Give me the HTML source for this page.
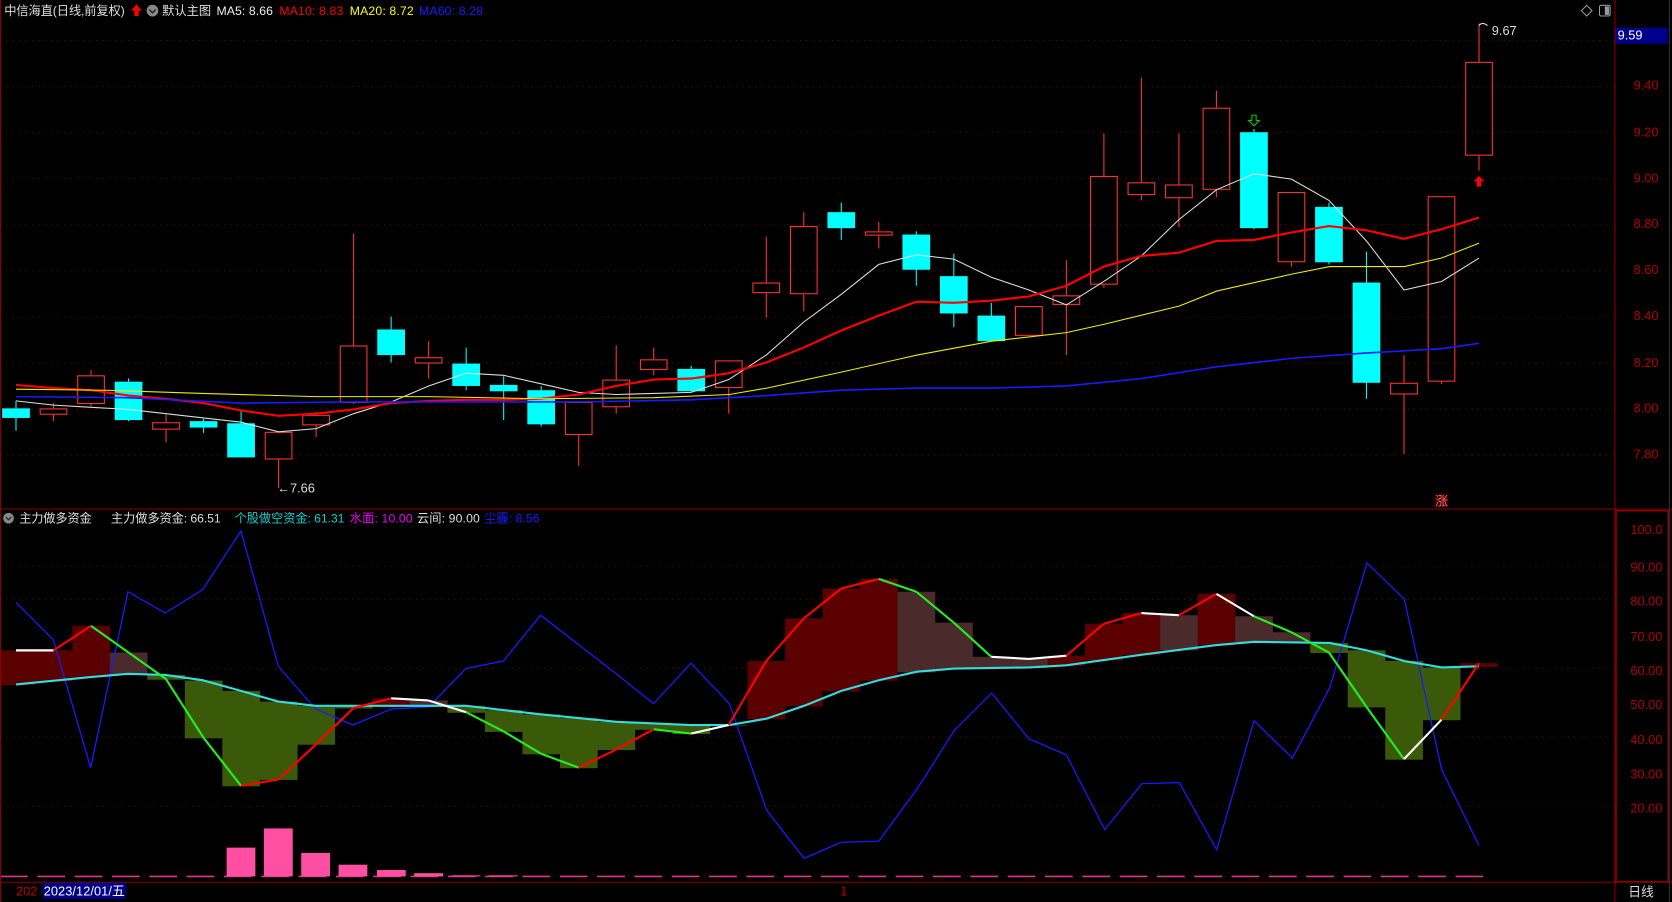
<!DOCTYPE html>
<html><head><meta charset="utf-8"><style>
html,body{margin:0;padding:0;background:#000;width:1672px;height:902px;overflow:hidden}
svg{display:block}
text{font-family:"Liberation Sans","Noto Sans CJK SC",sans-serif;font-size:12px}
.h{font-size:11.5px}
</style></head><body>
<svg id="s" width="1672" height="902" viewBox="0 0 1568 846" preserveAspectRatio="none">
<rect width="1568" height="846" fill="#000"/>
<g id="grid"></g>
<g id="low"></g>
<g id="main"></g>
<line x1="1514.5" y1="0" x2="1514.5" y2="846" stroke="#8b0000" stroke-width="1"/>
<line x1="0" y1="477.5" x2="1568" y2="477.5" stroke="#8b0000"/>
<line x1="0" y1="827.5" x2="1568" y2="827.5" stroke="#8b0000"/>
<rect x="1515.5" y="479" width="49" height="348" fill="none" stroke="#8b0000" stroke-width="1.5"/>
<line x1="0.5" y1="0" x2="0.5" y2="846" stroke="#8b0000"/>
<line x1="1565.5" y1="0" x2="1565.5" y2="846" stroke="#333"/>
<text class="h" x="4" y="14" fill="#ddd" textLength="113">中信海直(日线,前复权)</text>
<path d="M128 4 l5 6 h-3 v5 h-4 v-5 h-3z" fill="#f00"/>
<circle cx="143" cy="10" r="5.5" fill="#888"/><path d="M140 9 l3 3 l3 -3" stroke="#222" fill="none" stroke-width="1.3"/>
<text class="h" x="152" y="14" fill="#ddd" textLength="46">默认主图</text>
<text class="h" x="203" y="14" fill="#eee" textLength="53">MA5: 8.66</text>
<text class="h" x="262" y="14" fill="#f00" textLength="60">MA10: 8.83</text>
<text class="h" x="328" y="14" fill="#ff0" textLength="60">MA20: 8.72</text>
<text class="h" x="393" y="14" fill="#1a1aff" textLength="60">MA60: 8.28</text>
<path d="M1488 5 l5 5 l-5 5 l-5 -5z" fill="none" stroke="#999"/>
<rect x="1500" y="5" width="10" height="10" rx="1.5" fill="none" stroke="#999"/><rect x="1505" y="6" width="4" height="8" fill="#999"/>
<rect x="1515" y="26" width="49" height="15" fill="#00008b"/>
<text x="1517" y="37" fill="#fff" font-size="11">9.59</text>
<g fill="#b00000" font-size="12.5">
<text x="1532" y="84">9.40</text><text x="1532" y="128">9.20</text><text x="1532" y="171">9.00</text>
<text x="1532" y="214">8.80</text><text x="1532" y="257">8.60</text><text x="1532" y="300">8.40</text>
<text x="1532" y="344">8.20</text><text x="1532" y="387">8.00</text><text x="1532" y="430">7.80</text>
</g>
<g fill="#b00000" font-size="12.5">
<text x="1529" y="501">100.0</text><text x="1529" y="536">90.00</text><text x="1529" y="568">80.00</text>
<text x="1529" y="601">70.00</text><text x="1529" y="633">60.00</text><text x="1529" y="665">50.00</text>
<text x="1529" y="698">40.00</text><text x="1529" y="730">30.00</text><text x="1529" y="762">20.00</text>
</g>
<circle cx="8" cy="486" r="5" fill="#888"/><path d="M5.5 485 l2.5 2.5 l2.5 -2.5" stroke="#222" fill="none" stroke-width="1.2"/>
<text class="h" x="18" y="490" fill="#ddd" textLength="68">主力做多资金</text>
<text class="h" x="104" y="490" fill="#ddd" textLength="103">主力做多资金: 66.51</text>
<text class="h" x="220" y="490" fill="#1cc" textLength="103">个股做空资金: 61.31</text>
<text class="h" x="328" y="490" fill="#e0e" textLength="59">水面: 10.00</text>
<text class="h" x="391" y="490" fill="#ddd" textLength="59">云间: 90.00</text>
<text class="h" x="454" y="490" fill="#1a1aff" textLength="52">尘霾: 8.56</text>
<text x="15" y="840" fill="#c00000">202</text>
<rect x="40" y="828" width="78" height="15" fill="#00008b"/>
<text x="41" y="840" fill="#fff" textLength="76">2023/12/01/五</text>
<text x="788" y="840" fill="#c00000" font-size="10">1</text>
<text x="1527" y="841" fill="#ddd">日线</text>
<text x="260" y="462" fill="#ddd" font-size="11">←7.66</text>
<text x="1399" y="33" fill="#ddd" font-size="11">9.67</text>
<path d="M1387 24 q3 -4 8 0" stroke="#ddd" fill="none"/>
<path d="M1387 165 l5 5 h-3 v5 h-4 v-5 h-3z" fill="#f00"/>
<path d="M1176 118 l-5 -5 h3 v-5 h4 v5 h3z" fill="none" stroke="#0c0"/>
<rect x="1345" y="463" width="13" height="13" fill="#300"/><text x="1346" y="474" fill="#f66" font-size="10">涨</text>
</svg>
<script>
var NS="http://www.w3.org/2000/svg";
function el(p,t,a){var e=document.createElementNS(NS,t);for(var k in a)e.setAttribute(k,a[k]);document.getElementById(p).appendChild(e);return e;}
for(var y=38;y<440;y+=43.2) el("grid","line",{x1:0,x2:1514,y1:y,y2:y,stroke:"#7a0000","stroke-dasharray":"1 5"});
[531,562,627,691,756].forEach(function(y){el("grid","line",{x1:0,x2:1514,y1:y,y2:y,stroke:"#7a0000","stroke-dasharray":"1 5"});});
el("grid","line",{x1:0,x2:1400,y1:822,y2:822,stroke:"#e0308a","stroke-dasharray":"26 9","stroke-width":1.5});
var X=[];for(var i=0;i<40;i++)X.push(15+i*35.18);
var C=[[383,392,376,404,0],[383,389,378,395,1],[352,379,347,381,1],[358,394,355,395,0],[396,403,389,415,1],[395,401,393,406,0],[397,429,384,429,0],[405,431,405,458,1],[389,399,386,410,1],[324,378,219,379,1],[309,333,297,340,0],[335,341,320,355,1],[341,362,326,366,0],[361,367,353,394,0],[366,398,362,400,0],[377,408,376,437,1],[356,382,324,388,1],[337,347,326,352,1],[346,367,343,368,0],[338,364,338,388,1],[265,275,222,298,1],[212,276,199,292,1],[199,214,190,225,0],[217,221,208,233,1],[220,253,217,268,0],[259,294,238,307,0],[296,320,284,320,0],[287,315,287,315,1],[277,286,244,333,1],[165,267,125,270,1],[171,183,73,188,1],[173,186,125,213,1],[101,178,85,185,1],[124,214,121,215,0],[180,246,180,250,1],[194,246,190,248,0],[265,359,236,374,0],[359,370,333,426,1],[184,358,184,360,1],[58,146,22,160,1]];
C.forEach(function(c,i){var x=X[i],w=26;
 if(c[4]){el("main","line",{x1:x,x2:x,y1:c[2],y2:c[0],stroke:"#f33"});el("main","line",{x1:x,x2:x,y1:c[1],y2:c[3],stroke:"#f33"});
  el("main","rect",{x:x-w/2+.5,y:c[0]+.5,width:w-1,height:Math.max(c[1]-c[0]-1,1),fill:"none",stroke:"#f33"});}
 else{el("main","line",{x1:x,x2:x,y1:c[2],y2:c[3],stroke:"#0ff"});el("main","rect",{x:x-w/2,y:c[0],width:w,height:Math.max(c[1]-c[0],1),fill:"#0ff"});}
});
function pl(pts,col,sw,g){el(g||"main","polyline",{points:pts.map(function(p){return p.join(",")}).join(" "),fill:"none",stroke:col,"stroke-width":sw||1});}
var m5=[376,380,382,384,388,392,396,405,402,388,377,362,350,352,360,368,370,369,368,356,333,302,276,248,239,243,260,272,286,264,240,206,178,163,168,188,226,272,264,242];
var m10=[361,364,366,371,374,378,385,390,388,384,378,376,375,375,374,370,362,356,355,350,340,326,310,296,283,284,282,278,268,250,240,237,226,225,218,212,216,224,215,204];
pl(m5.map(function(y,i){return[X[i],y]}),"#ddd",1);
pl(m10.map(function(y,i){return[X[i],y]}),"#f00",2);
pl([[15,365],[100,366],[190,369],[296,372],[402,372],[507,374],[613,373],[684,370],[719,364],[789,349],[860,333],[930,320],[1000,312],[1036,304],[1106,287],[1141,273],[1212,257],[1247,250],[1317,250],[1352,242],[1387,228]],"#ee0",1);
pl([[15,372],[120,373],[226,378],[331,377],[437,377],[543,377],[648,375],[719,371],[789,366],[860,364],[930,364],[1000,362],[1071,355],[1141,344],[1212,336],[1282,331],[1352,327],[1387,322]],"#1a1aff",1.5);
var M=[610,610,587,612,637,692,737,731,698,664,655,657,668,686,707,720,703,684,688,680,620,580,552,543,555,584,616,618,615,585,575,577,557,578,593,612,663,712,675,622];
var cy=[[15,642],[85,635],[120,632],[155,633],[190,638],[226,648],[261,658],[296,662],[367,662],[437,662],[507,670],[578,677],[648,680],[684,680],[719,674],[754,662],[789,648],[824,638],[860,630],[895,627],[965,626],[1000,624],[1071,614],[1141,605],[1176,602],[1247,603],[1282,610],[1317,620],[1352,626],[1387,625]];
function cyAt(x){for(var j=0;j<cy.length-1;j++){if(x<=cy[j+1][0]){var a=cy[j],b=cy[j+1];return a[1]+(b[1]-a[1])*(x-a[0])/(b[0]-a[0]);}}return cy[cy.length-1][1];}
M.forEach(function(m,i){var c=cyAt(X[i]),x=X[i]-17.6;var prev=i?M[i-1]:m;var col;
 if(m<c){col=(m<=prev)?"#5a0000":"#4a2a2a";}else col="#3a5a0a";
 el("low","rect",{x:x,y:Math.min(m,c),width:35.4,height:Math.abs(m-c)+.5,fill:col});});
var pk=[[226,795],[261,777],[296,800],[331,811],[367,816],[402,819],[437,821],[472,821]];
pk.forEach(function(p){el("low","rect",{x:p[0]-13.5,y:p[1],width:27,height:822-p[1],fill:"#ff4fa3"});});
pl([[15,565],[50,600],[85,720],[120,555],[155,575],[190,553],[226,498],[261,625],[296,665],[331,680],[367,665],[402,663],[437,627],[472,620],[507,577],[543,605],[578,632],[613,660],[648,622],[684,660],[719,760],[754,805],[789,790],[824,789],[860,740],[895,685],[930,650],[965,693],[1000,708],[1036,778],[1071,735],[1106,734],[1141,797],[1176,676],[1212,711],[1247,645],[1282,528],[1317,562],[1352,722],[1387,793]],"#1a1aff",1.2,"low");
pl(cy,"#3dd",2,"low");
for(var i=0;i<39;i++){var d=M[i+1]-M[i];var col=Math.abs(d)<4?"#fff":(d<0?"#f00":"#2e2");
 if(i==0||i==11||i==18||i==32||i==37) col="#fff";
 el("low","line",{x1:X[i],y1:M[i],x2:X[i+1],y2:M[i+1],stroke:col,"stroke-width":2});}
</script>
</body></html>
